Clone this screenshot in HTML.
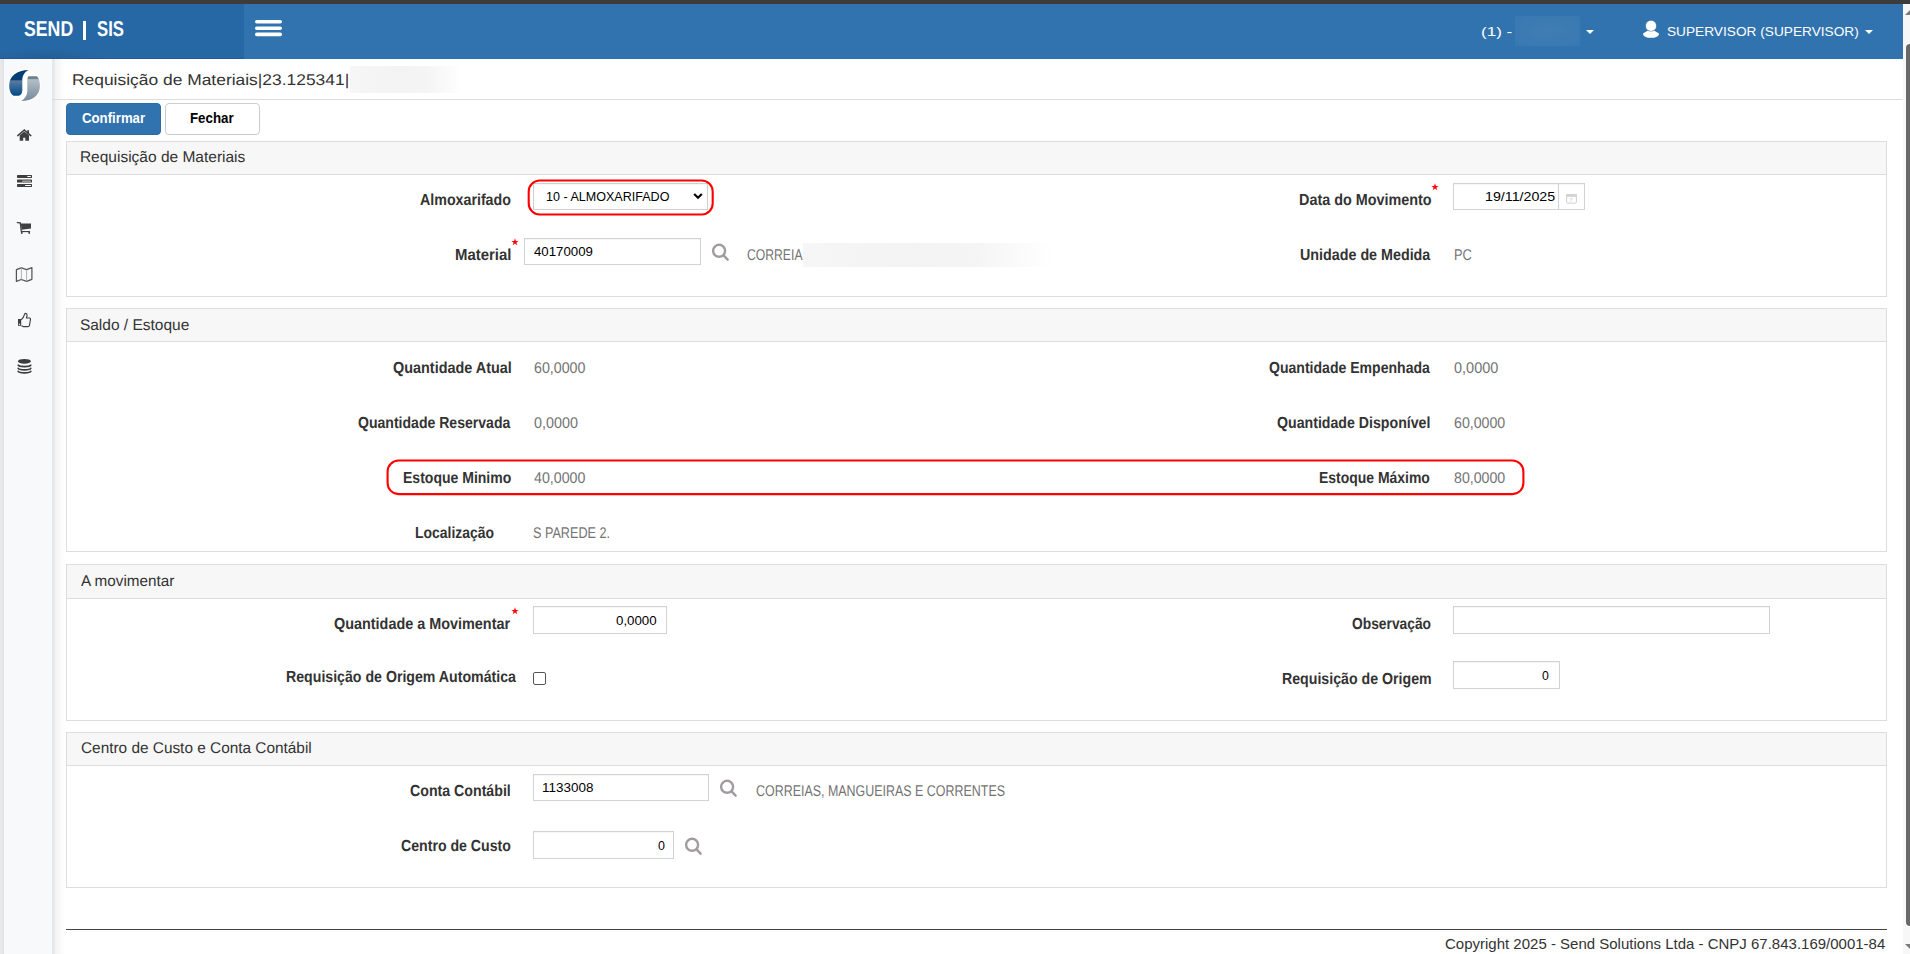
<!DOCTYPE html>
<html><head><meta charset="utf-8">
<style>
*{box-sizing:border-box}
html,body{margin:0;padding:0;width:1910px;height:954px;overflow:hidden;background:#fff;font-family:"Liberation Sans",sans-serif}
.a{position:absolute}
.t{position:absolute;white-space:pre;line-height:1;transform-origin:0 0}
.panel{position:absolute;left:66px;width:1821px;border:1px solid #ddd;background:#fff}
.ph{position:absolute;left:0;top:0;right:0;background:#f7f7f7;border-bottom:1px solid #ddd}
.inp{position:absolute;border:1px solid #d3d3d3;background:#fff;box-shadow:inset 0 1px 1px rgba(0,0,0,0.04)}
.hl{position:absolute;border:2px solid #e8141c;border-radius:9px}
.blur{position:absolute;background:linear-gradient(to right,#f6f6f6 0%,#f3f3f3 45%,#f5f5f5 70%,rgba(255,255,255,0) 100%)}
</style></head><body>

<!-- top strip -->
<div class="a" style="left:0;top:0;width:1910px;height:4px;background:#3c3c3c"></div>
<!-- header -->
<div class="a" style="left:0;top:4px;width:1903px;height:55px;background:#3173ae"></div>
<div class="a" style="left:0;top:4px;width:244px;height:55px;background:#2667a5"></div>
<div class="a" style="left:0;top:48px;width:110px;height:10px;background:radial-gradient(ellipse 60px 10px at 45px 10px,rgba(0,0,0,0.08),rgba(0,0,0,0))"></div>
<div class="a" style="left:0;top:58px;width:244px;height:1px;background:#205b96"></div>
<div class="a" style="left:83px;top:21px;width:3px;height:19px;background:#fff"></div>
<svg class="a" style="left:254px;top:19px" width="30" height="19" viewBox="0 0 30 19">
 <rect x="1" y="1" width="27" height="3.6" rx="1.8" fill="#fff"/>
 <rect x="1" y="7.5" width="27" height="3.6" rx="1.8" fill="#fff"/>
 <rect x="1" y="13.6" width="27" height="3.6" rx="1.8" fill="#fff"/>
</svg>
<div class="a" style="left:1515px;top:16px;width:65px;height:30px;background:radial-gradient(ellipse at center,rgba(255,255,255,0.07),rgba(255,255,255,0.035))"></div>
<svg class="a" style="left:1585px;top:29px" width="10" height="6"><path d="M1 1H9L5 5Z" fill="#fff"/></svg>
<svg class="a" style="left:1642px;top:20px" width="18" height="19" viewBox="0 0 18 19">
 <path d="M6 10.6L12 10.6L17 13.4C17 16.5 13.5 17.8 9 17.8C4.5 17.8 1 16.5 1 13.4Z" fill="#fff"/>
 <circle cx="9" cy="5.9" r="5.7" fill="#5d90c0"/>
 <circle cx="9" cy="5.9" r="5.1" fill="#fff"/>
</svg>
<svg class="a" style="left:1864px;top:29px" width="10" height="6"><path d="M1 1H9L5 5Z" fill="#fff"/></svg>

<!-- scrollbar -->
<div class="a" style="left:1903px;top:4px;width:7px;height:950px;background:#f7f7f7"></div>
<div class="a" style="left:1906px;top:44px;width:4px;height:882px;background:#686868;border-radius:4px 0 0 4px"></div>
<svg class="a" style="left:1903px;top:8px" width="7" height="8"><path d="M7 2V7H2Z" fill="#7a7a7a"/></svg>
<svg class="a" style="left:1903px;top:943px" width="7" height="8"><path d="M7 6V1H2Z" fill="#7a7a7a"/></svg>

<!-- sidebar -->
<div class="a" style="left:0;top:59px;width:52px;height:895px;background:#f8f9fb"></div>
<div class="a" style="left:0;top:59px;width:4px;height:895px;background:linear-gradient(to right,#e9e9e9,#e6e6e6 70%,#dedede)"></div>
<div class="a" style="left:52px;top:59px;width:14px;height:895px;background:linear-gradient(to right,#e7e7e7 0px,#e9e9e9 2.5px,#f3f3f3 3px,#f8f8f8 7px,#fdfdfd 11px,#fff 14px)"></div>

<!-- title -->
<div class="blur" style="left:350px;top:66px;width:112px;height:27px"></div>
<div class="a" style="left:52px;top:99px;width:1851px;height:1px;background:#ddd"></div>

<!-- buttons -->
<div class="a" style="left:66px;top:103px;width:95px;height:32px;background:#3173ae;border:1px solid #2e6da4;border-radius:4px"></div>
<div class="a" style="left:165px;top:103px;width:95px;height:32px;background:#fff;border:1px solid #ccc;border-radius:4px"></div>

<!-- panels -->
<div class="panel" style="top:141px;height:156px"><div class="ph" style="height:33px"></div></div>
<div class="panel" style="top:308px;height:244px"><div class="ph" style="height:33px"></div></div>
<div class="panel" style="top:564px;height:157px"><div class="ph" style="height:34px"></div></div>
<div class="panel" style="top:732px;height:156px"><div class="ph" style="height:33px"></div></div>

<!-- P1 controls -->
<div class="inp" style="left:533px;top:183px;width:175px;height:27px;border-color:#d0d0d0"></div>
<svg class="a" style="left:692px;top:192px" width="12" height="9" viewBox="0 0 12 9"><path d="M2.2 2L6 5.8L9.8 2" stroke="#000" stroke-width="2.1" fill="none"/></svg>
<svg class="a" style="left:0;top:0;overflow:visible" width="1" height="1"><rect x="528.7" y="180.5" width="184" height="34" rx="11" fill="none" stroke="#ff0000" stroke-width="2.1"/></svg>
<div class="inp" style="left:524px;top:238px;width:177px;height:27px"></div>
<div class="inp" style="left:1453px;top:183px;width:106px;height:27px"></div>
<div class="inp" style="left:1558px;top:183px;width:27px;height:27px"></div>
<div class="blur" style="left:803px;top:243px;width:250px;height:24px"></div>

<!-- P2 highlight -->
<svg class="a" style="left:0;top:0;overflow:visible" width="1" height="1"><rect x="387.6" y="460.5" width="1135.8" height="33.6" rx="11" fill="none" stroke="#ff0000" stroke-width="2.1"/></svg>

<!-- P3 controls -->
<div class="inp" style="left:533px;top:606px;width:134px;height:28px"></div>
<div class="inp" style="left:1453px;top:606px;width:317px;height:28px"></div>
<div class="inp" style="left:1453px;top:661px;width:107px;height:28px"></div>
<div class="a" style="left:533px;top:672px;width:13px;height:13px;border:1px solid #555;border-radius:2px;background:#fff"></div>

<!-- P4 controls -->
<div class="inp" style="left:533px;top:774px;width:176px;height:27px"></div>
<div class="inp" style="left:533px;top:831px;width:141px;height:28px"></div>

<!-- footer -->
<div class="a" style="left:66px;top:929px;width:1821px;height:1px;background:#444"></div>


<!-- logo -->
<svg class="a" style="left:4px;top:64px" width="44" height="44" viewBox="0 0 44 44">
 <defs>
  <linearGradient id="gb" x1="0" y1="0" x2="0" y2="1">
   <stop offset="0" stop-color="#023d72"/><stop offset="0.38" stop-color="#033f75"/>
   <stop offset="0.42" stop-color="#5b7aa0"/><stop offset="1" stop-color="#004b87"/>
  </linearGradient>
  <linearGradient id="gg" x1="0" y1="0" x2="0" y2="1">
   <stop offset="0" stop-color="#6c7e89"/><stop offset="0.1" stop-color="#73858f"/>
   <stop offset="0.14" stop-color="#b1bec5"/><stop offset="1" stop-color="#76899a"/>
  </linearGradient>
 </defs>
 <circle cx="20.6" cy="21.3" r="16.2" fill="#fff"/>
 <path d="M24.6 6C13 6.3 5.2 12 5.2 21.5C5.2 26.5 6.8 30.2 9.6 31.7L14.5 31.8C17 31.5 18.3 29.3 18.3 26L18.3 15.5C18.6 11.2 21 7.6 24.6 6Z" fill="url(#gb)"/>
 <path d="M24.4 12.2L33 12.2C35.2 14.3 35.9 18.2 35.9 22C35.9 31 28.5 37 17.3 37C21.2 34.6 23.3 31 23.3 27L23.3 16.2C23.3 14.2 23.7 12.9 24.4 12.2Z" fill="url(#gg)"/>
</svg>
<!-- sidebar icons -->
<svg class="a" style="left:14px;top:124px" width="20" height="20" viewBox="0 0 20 20">
 <path d="M3.8 11.6L10.3 6L16.8 11.6" stroke="#404040" stroke-width="1.5" fill="none" stroke-linecap="round"/>
 <rect x="13.2" y="6.2" width="1.8" height="3.5" fill="#404040"/>
 <path d="M5.7 11.2L10.3 7.6L15 11.2V16.8H11.3V13.7H9.2V16.8H5.7Z" fill="#404040"/>
</svg>
<svg class="a" style="left:14px;top:171px" width="20" height="20" viewBox="0 0 20 20">
 <rect x="3" y="4" width="15" height="2.9" rx="0.6" fill="#3e3e3e"/>
 <rect x="3" y="8.6" width="15" height="2.9" rx="0.6" fill="#3e3e3e"/>
 <rect x="3" y="13.1" width="15" height="2.8" rx="0.6" fill="#3e3e3e"/>
 <rect x="13.2" y="4.9" width="3.8" height="1.1" rx="0.5" fill="#fff"/>
 <rect x="8" y="9.6" width="9" height="1.2" rx="0.5" fill="#b4b4b4"/>
 <rect x="11" y="14" width="6" height="1.1" rx="0.5" fill="#fff"/>
</svg>
<svg class="a" style="left:14px;top:217px" width="20" height="20" viewBox="0 0 20 20">
 <path d="M3.3 5.6L6.3 5.9L7.4 15" stroke="#404040" stroke-width="1.3" fill="none" stroke-linecap="round"/>
 <path d="M6.8 6.4H17V11.6L7.6 12.8Z" fill="#404040"/>
 <rect x="7" y="14" width="9" height="1.1" fill="#404040"/>
 <rect x="7" y="15" width="1.6" height="1.8" fill="#404040"/>
 <rect x="14.4" y="15" width="1.6" height="1.8" fill="#404040"/>
</svg>
<svg class="a" style="left:14px;top:264px" width="20" height="20" viewBox="0 0 20 20">
 <path d="M2.4 5.6L7.3 3.8L12.6 5.7L17.9 3.6V15.3L12.6 17.4L7.3 15.5L2.4 17.4Z" stroke="#555" stroke-width="1.25" fill="none" stroke-linejoin="round"/>
 <path d="M7.4 4V15.4M12.6 5.8V17.2" stroke="#aaa" stroke-width="0.9"/>
</svg>
<svg class="a" style="left:14px;top:310px" width="20" height="20" viewBox="0 0 20 20">
 <rect x="4" y="9" width="3.2" height="6.8" fill="#3e3e3e"/>
 <circle cx="5.5" cy="14.3" r="0.7" fill="#fff"/>
 <path d="M7.2 9.8C9 8.5 10 6.5 10.6 4.2C11 3 12.6 3 13 4.4C13.4 5.6 12.8 7 12.4 8H15.6C16.4 8.2 16.7 9 16.4 10L15.4 15.6C15.2 16.3 14.7 16.6 14 16.6H9.2L7.4 15.7" stroke="#404040" stroke-width="1.15" fill="none" stroke-linejoin="round"/>
</svg>
<svg class="a" style="left:14px;top:356px" width="20" height="20" viewBox="0 0 20 20">
 <ellipse cx="10.4" cy="5.3" rx="6.4" ry="2.4" fill="#3c3c3c"/>
 <path d="M4.2 9.2C5 11 16 11 16.8 9.2" stroke="#3c3c3c" stroke-width="1.7" fill="none" stroke-linecap="round"/>
 <path d="M4.2 12.3C5 14.3 16 14.3 16.8 12.3" stroke="#3c3c3c" stroke-width="1.7" fill="none" stroke-linecap="round"/>
 <path d="M4.2 15.3C5 17.4 16 17.4 16.8 15.3" stroke="#3c3c3c" stroke-width="1.7" fill="none" stroke-linecap="round"/>
</svg>
<!-- search icons -->
<svg class="a" style="left:708px;top:240px" width="24" height="24" viewBox="0 0 24 24">
 <circle cx="11.1" cy="10.8" r="6.0" stroke="#a09ca0" stroke-width="2.4" fill="none"/>
 <path d="M15.8 15.6L19.6 19.6" stroke="#a09ca0" stroke-width="2.5" stroke-linecap="round"/>
</svg>
<svg class="a" style="left:716px;top:776px" width="24" height="24" viewBox="0 0 24 24">
 <circle cx="11.1" cy="10.8" r="6.0" stroke="#a09ca0" stroke-width="2.4" fill="none"/>
 <path d="M15.8 15.6L19.6 19.6" stroke="#a09ca0" stroke-width="2.5" stroke-linecap="round"/>
</svg>
<svg class="a" style="left:681px;top:834px" width="24" height="24" viewBox="0 0 24 24">
 <circle cx="11.1" cy="10.8" r="6.0" stroke="#a09ca0" stroke-width="2.4" fill="none"/>
 <path d="M15.8 15.6L19.6 19.6" stroke="#a09ca0" stroke-width="2.5" stroke-linecap="round"/>
</svg>
<!-- calendar -->
<svg class="a" style="left:1560px;top:186px" width="24" height="24" viewBox="0 0 24 24">
 <rect x="6.7" y="8.5" width="9.7" height="8.6" rx="0.8" stroke="#cfcfcf" stroke-width="1" fill="none"/>
 <rect x="6.2" y="8" width="10.7" height="2.9" fill="#d3d3d3"/>
 <path d="M9.6 12.6H12.4L10.6 15.6" stroke="#d8d8d8" stroke-width="0.9" fill="none"/>
</svg>
<!-- asterisks -->
<svg class="a" style="left:510px;top:237px" width="10" height="10" viewBox="0 0 10 10"><path id="st" d="M5 1.2L5.9 3.9L8.7 3.9L6.4 5.5L7.3 8.3L5 6.6L2.7 8.3L3.6 5.5L1.3 3.9L4.1 3.9Z" fill="#f00"/></svg>
<svg class="a" style="left:1430px;top:182px" width="10" height="10" viewBox="0 0 10 10"><path d="M5 1.2L5.9 3.9L8.7 3.9L6.4 5.5L7.3 8.3L5 6.6L2.7 8.3L3.6 5.5L1.3 3.9L4.1 3.9Z" fill="#f00"/></svg>
<svg class="a" style="left:510px;top:606px" width="10" height="10" viewBox="0 0 10 10"><path d="M5 1.2L5.9 3.9L8.7 3.9L6.4 5.5L7.3 8.3L5 6.6L2.7 8.3L3.6 5.5L1.3 3.9L4.1 3.9Z" fill="#f00"/></svg>

<div class="t" style="left:23.90px;top:19px;font-size:21.5px;font-weight:700;color:#fff;transform:scale(0.8237,1);text-rendering:geometricPrecision;">SEND</div>
<div class="t" style="left:97.20px;top:19px;font-size:21.5px;font-weight:700;color:#fff;transform:scale(0.7765,1);text-rendering:geometricPrecision;">SIS</div>
<div class="t" style="left:1480.69px;top:25px;font-size:13px;font-weight:400;color:#fff;transform:scale(1.3130,1);">(1) -</div>
<div class="t" style="left:1666.75px;top:25px;font-size:13px;font-weight:400;color:#fff;transform:scale(1.0519,1);">SUPERVISOR (SUPERVISOR)</div>
<div class="t" style="left:71.68px;top:73px;font-size:15.5px;font-weight:400;color:#333;transform:scale(1.1233,1);text-rendering:geometricPrecision;">Requisição de Materiais|23.125341|</div>
<div class="t" style="left:82.00px;top:111px;font-size:14px;font-weight:700;color:#fff;transform:scale(0.9433,1);">Confirmar</div>
<div class="t" style="left:190.35px;top:111px;font-size:14px;font-weight:700;color:#000;transform:scale(0.9489,1);">Fechar</div>
<div class="t" style="left:79.90px;top:150px;font-size:15.5px;font-weight:400;color:#333;text-rendering:geometricPrecision;">Requisição de Materiais</div>
<div class="t" style="left:79.90px;top:318px;font-size:15.5px;font-weight:400;color:#333;text-rendering:geometricPrecision;">Saldo / Estoque</div>
<div class="t" style="left:80.50px;top:574px;font-size:15.5px;font-weight:400;color:#333;transform:scale(0.9842,1);text-rendering:geometricPrecision;">A movimentar</div>
<div class="t" style="left:80.90px;top:741px;font-size:15.5px;font-weight:400;color:#333;transform:scale(0.9918,1);text-rendering:geometricPrecision;">Centro de Custo e Conta Contábil</div>
<div class="t" style="left:419.90px;top:193px;font-size:16px;font-weight:700;color:#333;transform:scale(0.8892,1);text-rendering:geometricPrecision;">Almoxarifado</div>
<div class="t" style="left:454.67px;top:248px;font-size:16px;font-weight:700;color:#333;transform:scale(0.9322,1);text-rendering:geometricPrecision;">Material</div>
<div class="t" style="left:1298.50px;top:193px;font-size:16px;font-weight:700;color:#333;transform:scale(0.8986,1);text-rendering:geometricPrecision;">Data do Movimento</div>
<div class="t" style="left:1300.11px;top:248px;font-size:16px;font-weight:700;color:#333;transform:scale(0.8938,1);text-rendering:geometricPrecision;">Unidade de Medida</div>
<div class="t" style="left:392.60px;top:361px;font-size:16px;font-weight:700;color:#333;transform:scale(0.9008,1);text-rendering:geometricPrecision;">Quantidade Atual</div>
<div class="t" style="left:357.60px;top:416px;font-size:16px;font-weight:700;color:#333;transform:scale(0.8782,1);text-rendering:geometricPrecision;">Quantidade Reservada</div>
<div class="t" style="left:402.62px;top:471px;font-size:16px;font-weight:700;color:#333;transform:scale(0.8762,1);text-rendering:geometricPrecision;">Estoque Minimo</div>
<div class="t" style="left:414.83px;top:526px;font-size:16px;font-weight:700;color:#333;transform:scale(0.8722,1);text-rendering:geometricPrecision;">Localização</div>
<div class="t" style="left:1268.50px;top:361px;font-size:16px;font-weight:700;color:#333;transform:scale(0.8783,1);text-rendering:geometricPrecision;">Quantidade Empenhada</div>
<div class="t" style="left:1277.00px;top:416px;font-size:16px;font-weight:700;color:#333;transform:scale(0.8850,1);text-rendering:geometricPrecision;">Quantidade Disponível</div>
<div class="t" style="left:1319.33px;top:471px;font-size:16px;font-weight:700;color:#333;transform:scale(0.8722,1);text-rendering:geometricPrecision;">Estoque Máximo</div>
<div class="t" style="left:334.00px;top:617px;font-size:16px;font-weight:700;color:#333;transform:scale(0.9000,1);text-rendering:geometricPrecision;">Quantidade a Movimentar</div>
<div class="t" style="left:286.02px;top:670px;font-size:16px;font-weight:700;color:#333;transform:scale(0.8846,1);text-rendering:geometricPrecision;">Requisição de Origem Automática</div>
<div class="t" style="left:1352.20px;top:617px;font-size:16px;font-weight:700;color:#333;transform:scale(0.8626,1);text-rendering:geometricPrecision;">Observação</div>
<div class="t" style="left:1281.91px;top:672px;font-size:16px;font-weight:700;color:#333;transform:scale(0.8856,1);text-rendering:geometricPrecision;">Requisição de Origem</div>
<div class="t" style="left:410.30px;top:784px;font-size:16px;font-weight:700;color:#333;transform:scale(0.8858,1);text-rendering:geometricPrecision;">Conta Contábil</div>
<div class="t" style="left:400.90px;top:839px;font-size:16px;font-weight:700;color:#333;transform:scale(0.8831,1);text-rendering:geometricPrecision;">Centro de Custo</div>
<div class="t" style="left:747.00px;top:248px;font-size:15.5px;font-weight:400;color:#737373;transform:scale(0.7859,1);text-rendering:geometricPrecision;">CORREIA</div>
<div class="t" style="left:1453.57px;top:248px;font-size:15.5px;font-weight:400;color:#737373;transform:scale(0.8300,1);text-rendering:geometricPrecision;">PC</div>
<div class="t" style="left:534.00px;top:361px;font-size:15.5px;font-weight:400;color:#737373;transform:scale(0.9179,1);text-rendering:geometricPrecision;">60,0000</div>
<div class="t" style="left:534.00px;top:416px;font-size:15.5px;font-weight:400;color:#737373;transform:scale(0.9255,1);text-rendering:geometricPrecision;">0,0000</div>
<div class="t" style="left:534.00px;top:471px;font-size:15.5px;font-weight:400;color:#737373;transform:scale(0.9161,1);text-rendering:geometricPrecision;">40,0000</div>
<div class="t" style="left:533.18px;top:526px;font-size:15.5px;font-weight:400;color:#737373;transform:scale(0.8151,1);text-rendering:geometricPrecision;">S PAREDE 2.</div>
<div class="t" style="left:1454.00px;top:361px;font-size:15.5px;font-weight:400;color:#737373;transform:scale(0.9340,1);text-rendering:geometricPrecision;">0,0000</div>
<div class="t" style="left:1454.00px;top:416px;font-size:15.5px;font-weight:400;color:#737373;transform:scale(0.9143,1);text-rendering:geometricPrecision;">60,0000</div>
<div class="t" style="left:1454.00px;top:471px;font-size:15.5px;font-weight:400;color:#737373;transform:scale(0.9143,1);text-rendering:geometricPrecision;">80,0000</div>
<div class="t" style="left:756.00px;top:784px;font-size:15.5px;font-weight:400;color:#737373;transform:scale(0.8032,1);text-rendering:geometricPrecision;">CORREIAS, MANGUEIRAS E CORRENTES</div>
<div class="t" style="left:546.43px;top:190px;font-size:13px;font-weight:400;color:#000;transform:scale(0.9654,1);">10 - ALMOXARIFADO</div>
<div class="t" style="left:534.00px;top:245px;font-size:13px;font-weight:400;color:#000;transform:scale(1.0172,1);">40170009</div>
<div class="t" style="left:1484.90px;top:190px;font-size:13px;font-weight:400;color:#000;transform:scale(1.0952,1);">19/11/2025</div>
<div class="t" style="left:616.10px;top:614px;font-size:13px;font-weight:400;color:#000;transform:scale(1.0225,1);">0,0000</div>
<div class="t" style="left:1542.40px;top:669px;font-size:13px;font-weight:400;color:#000;transform:scale(0.9429,1);">0</div>
<div class="t" style="left:542.47px;top:781px;font-size:13px;font-weight:400;color:#000;transform:scale(1.0347,1);">1133008</div>
<div class="t" style="left:657.60px;top:839px;font-size:13px;font-weight:400;color:#000;transform:scale(0.9571,1);">0</div>
<div class="t" style="left:1444.60px;top:937px;font-size:14.5px;font-weight:400;color:#333;transform:scale(1.0345,1);">Copyright 2025 - Send Solutions Ltda - CNPJ 67.843.169/0001-84</div>
</body></html>
